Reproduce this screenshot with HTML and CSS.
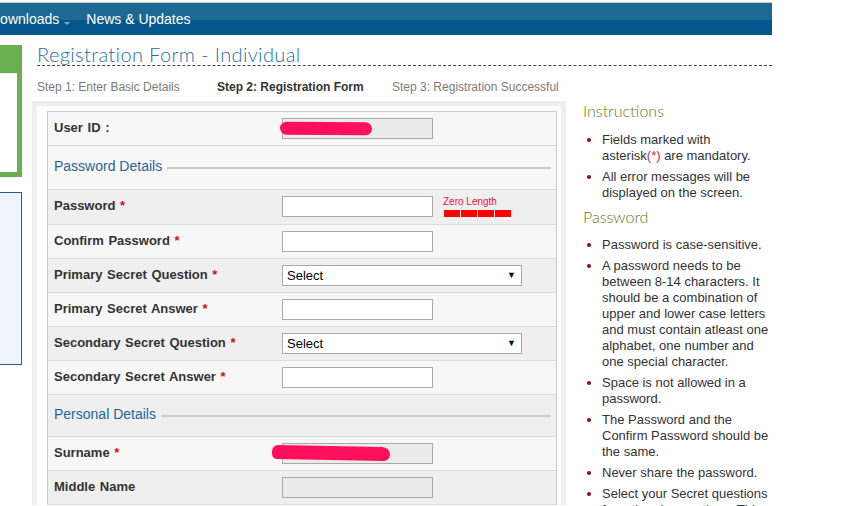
FILE: index.html
```html
<!DOCTYPE html>
<html lang="en">
<head>
<meta charset="utf-8">
<title>Registration Form - Individual</title>
<link rel="stylesheet" href="styles.css">
</head>
<body>
<header class="topnav">
  <div class="nav-item nav-dl">Downloads <span class="caret"></span></div>
  <div class="nav-item">News &amp; Updates</div>
</header>
<div class="page">
  <aside class="sidebar">
    <div class="green-box"><div class="green-inner"></div></div>
    <div class="blue-box"></div>
  </aside>
  <main class="content">
    <h1 class="title">Registration Form - Individual</h1>
    <div class="steps">
      <span class="step step1">Step 1: Enter Basic Details</span>
      <span class="step step2 step-active">Step 2: Registration Form</span>
      <span class="step">Step 3: Registration Successful</span>
    </div>
    <div class="columns">
      <div class="form-panel">
        <div class="form-inner">
          <div class="table">
            <div class="row light">
              <div class="label">User ID :</div>
              <div class="field"><span class="input-wrap"><input class="input disabled" type="text" disabled><span class="scribble s1"></span></span></div>
            </div>
            <div class="row section light">
              <span class="section-title">Password Details</span><span class="section-line"></span>
            </div>
            <div class="row dark tall">
              <div class="label">Password <span class="req">*</span></div>
              <div class="field">
                <input class="input" type="password">
                <div class="strength">
                  <div class="strength-text">Zero Length</div>
                  <div class="bars"><span></span><span></span><span></span><span></span></div>
                </div>
              </div>
            </div>
            <div class="row light">
              <div class="label">Confirm Password <span class="req">*</span></div>
              <div class="field"><input class="input" type="password"></div>
            </div>
            <div class="row dark">
              <div class="label">Primary Secret Question <span class="req">*</span></div>
              <div class="field"><span class="select-wrap"><select class="select"><option>Select</option></select><span class="arrow">&#9660;</span></span></div>
            </div>
            <div class="row light">
              <div class="label">Primary Secret Answer <span class="req">*</span></div>
              <div class="field"><input class="input" type="text"></div>
            </div>
            <div class="row dark">
              <div class="label">Secondary Secret Question <span class="req">*</span></div>
              <div class="field"><span class="select-wrap"><select class="select"><option>Select</option></select><span class="arrow">&#9660;</span></span></div>
            </div>
            <div class="row light">
              <div class="label">Secondary Secret Answer <span class="req">*</span></div>
              <div class="field"><input class="input" type="text"></div>
            </div>
            <div class="row section section2 dark">
              <span class="section-title">Personal Details</span><span class="section-line"></span>
            </div>
            <div class="row light">
              <div class="label">Surname <span class="req">*</span></div>
              <div class="field"><span class="input-wrap"><input class="input disabled" type="text" disabled><span class="scribble s2"></span></span></div>
            </div>
            <div class="row dark">
              <div class="label">Middle Name</div>
              <div class="field"><input class="input disabled" type="text" disabled></div>
            </div>
          </div>
        </div>
      </div>
      <aside class="instructions">
        <h2 class="inst-title">Instructions</h2>
        <ul class="inst-list">
          <li>Fields marked with asterisk<span class="ast">(*)</span> are mandatory.</li>
          <li>All error messages will be displayed on the screen.</li>
        </ul>
        <h2 class="inst-title inst-title2">Password</h2>
        <ul class="inst-list">
          <li>Password is case-sensitive.</li>
          <li>A password needs to be between 8-14 characters. It should be a combination of upper and lower case letters and must contain atleast one alphabet, one number and one special character.</li>
          <li>Space is not allowed in a password.</li>
          <li>The Password and the Confirm Password should be the same.</li>
          <li>Never share the password.</li>
          <li>Select your Secret questions from the given options. This will</li>
        </ul>
      </aside>
    </div>
  </main>
</div>
</body>
</html>
```

FILE: styles.css
```css
html, body {
  margin: 0;
  padding: 0;
  background: #ffffff;
  overflow: hidden;
}
body {
  font-family: "Liberation Sans", Arial, sans-serif;
  color: #333333;
  width: 858px;
  height: 506px;
}

/* Top navigation */
.topnav {
  margin-top: 2px;
  width: 772px;
  height: 32px;
  border-top: 1px solid #c8c8c8;
  background: linear-gradient(#1e6894 0, #1e6894 17px, #03578a 17px, #03578a 100%);
  display: flex;
  align-items: center;
  overflow: hidden;
}
.nav-item {
  color: #ffffff;
  font-size: 14px;
  line-height: 16px;
  white-space: nowrap;
  display: flex;
  align-items: center;
}
.nav-dl {
  margin-left: -10px;
  margin-right: 16px;
}
.caret {
  display: inline-block;
  width: 0;
  height: 0;
  margin-left: 5px;
  margin-top: 8px;
  border-left: 3px solid transparent;
  border-right: 3px solid transparent;
  border-top: 3px solid #8aa6bd;
}

/* Page layout */
.page {
  display: flex;
  align-items: flex-start;
}
.sidebar {
  width: 22px;
  flex-shrink: 0;
  display: flex;
  flex-direction: column;
}
.green-box {
  margin-top: 10px;
  background: #6aaf52;
  padding: 28px 5px 5px 0;
}
.green-inner {
  width: 17px;
  height: 99px;
  background: #ffffff;
}
.blue-box {
  margin-top: 15px;
  height: 171px;
  background: #eef4fc;
  border: 1px solid #2b5a8c;
  border-left: none;
}

.content {
  margin-left: 15px;
  width: 735px;
  flex-shrink: 0;
}
.title {
  margin: 9px 0 0 0;
  font-family: "Lato", "DejaVu Sans", sans-serif;
  font-weight: 300;
  font-size: 20px;
  line-height: 21px;
  color: #1e6fa5;
  letter-spacing: 0.37px;
  border-bottom: 1px dashed #444444;
  padding-bottom: 0;
}
.steps {
  margin-top: 14px;
  display: flex;
  font-size: 12px;
  line-height: 14px;
  color: #7a7a7a;
  white-space: nowrap;
}
.step1 { width: 180px; }
.step2 { width: 175px; }
.step-active {
  font-weight: bold;
  color: #333333;
}

.columns {
  margin-top: 7px;
  display: flex;
  align-items: flex-start;
}

/* Form panel */
.form-panel {
  margin-left: -5px;
  width: 524px;
  flex-shrink: 0;
  background: #efefef;
  padding: 5px 5px 0 5px;
}
.form-inner {
  background: #ffffff;
  padding: 5px 4px 0 10px;
}
.table {
  border: 1px solid #cccccc;
  border-bottom: none;
}
.row {
  display: grid;
  grid-template-columns: 234px 1fr;
  height: 33px;
  border-bottom: 1px solid #dcdcdc;
  align-items: start;
}
.row.tall {
  height: 34px;
}
.light { background: #f7f7f7; }
.dark { background: #efefef; }

.label {
  padding: 8px 0 0 6px;
  font-size: 13px;
  line-height: 15px;
  font-weight: bold;
  color: #333333;
  word-spacing: 1px;
  white-space: nowrap;
}
.req {
  color: #cc1111;
  font-weight: bold;
}
.field {
  padding-top: 6px;
  display: flex;
  align-items: flex-start;
}
.input {
  box-sizing: border-box;
  width: 151px;
  height: 21px;
  margin: 0;
  border: 1px solid #a9a9a9;
  background: #ffffff;
  padding: 0 4px;
  font-family: "Liberation Sans", Arial, sans-serif;
  font-size: 13px;
}
.input.disabled {
  background: #ebebeb;
}
.input-wrap {
  position: relative;
  display: inline-block;
  height: 21px;
}
.scribble {
  position: absolute;
  background: #ff0f5c;
  border-radius: 7px;
}
.scribble.s1 {
  left: -2px;
  top: 4px;
  width: 92px;
  height: 13px;
  transform: rotate(0.5deg);
}
.scribble.s2 {
  left: -10px;
  top: 3px;
  width: 118px;
  height: 14px;
  border-radius: 7px 9px 7px 6px;
  transform: rotate(1deg);
}

.select-wrap {
  position: relative;
  display: inline-block;
  height: 21px;
}
.select {
  box-sizing: border-box;
  width: 240px;
  height: 21px;
  margin: 0;
  border: 1px solid #a9a9a9;
  background: #ffffff;
  padding: 0 4px;
  font-family: "Liberation Sans", Arial, sans-serif;
  font-size: 13px;
  color: #000000;
  -webkit-appearance: none;
  appearance: none;
  border-radius: 0;
  outline: none;
}
.arrow {
  position: absolute;
  right: 6px;
  top: 5px;
  font-size: 9px;
  line-height: 10px;
  color: #111111;
  pointer-events: none;
}

.strength {
  margin-left: 10px;
  display: flex;
  flex-direction: column;
}
.strength-text {
  font-size: 10px;
  line-height: 12px;
  color: #f0103a;
}
.bars {
  margin-top: 2px;
  margin-left: 1px;
  display: flex;
  gap: 1px;
}
.bars span {
  display: block;
  width: 16px;
  height: 7px;
  background: #ff0000;
}

.row.section {
  height: 44px;
  display: flex;
  align-items: center;
  box-sizing: border-box;
  padding: 0 5px 3px 6px;
}
.row.section2 {
  height: 42px;
  padding-bottom: 2px;
}
.section-title {
  font-size: 14px;
  line-height: 17px;
  color: #1f659b;
  white-space: nowrap;
}
.section-line {
  flex: 1;
  height: 2px;
  background: #cccccc;
  margin-left: 5px;
  margin-top: 3px;
}

/* Instructions */
.instructions {
  margin-left: 17px;
  width: 189px;
  flex-shrink: 0;
}
.inst-title {
  margin: 0;
  font-family: "Lato", "DejaVu Sans", sans-serif;
  font-weight: 300;
  font-size: 16px;
  line-height: 20px;
  color: #627a1e;
}
.inst-title2 {
  margin-top: 6px;
}
.inst-list {
  margin: 11px 0 0 0;
  padding: 0 0 0 19px;
  font-size: 13px;
  line-height: 16px;
  color: #333333;
}
.inst-title2 + .inst-list {
  margin-top: 10px;
}
.inst-list li {
  margin-bottom: 5px;
}
.inst-list li::marker {
  color: #8b1010;
}
.ast {
  color: #d0285a;
}
```
